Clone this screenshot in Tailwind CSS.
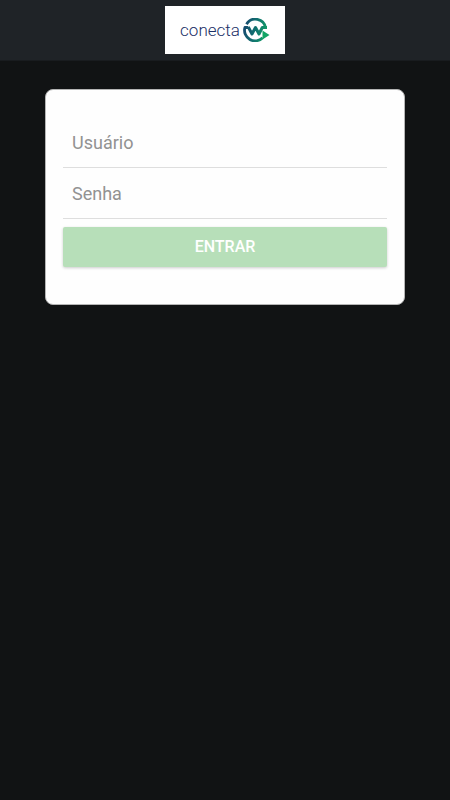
<!DOCTYPE html>
<html lang="pt-BR">
<head>
<meta charset="utf-8">
<meta name="viewport" content="width=device-width, initial-scale=1">
<title>Conecta</title>
<script src="https://cdn.jsdelivr.net/npm/@tailwindcss/browser@4"></script>
</head>
<body class="min-h-screen bg-[#111314] font-['Roboto',sans-serif]">
<header class="flex justify-center border-b border-[#191c1f] bg-[#1f2327] py-1.5">
  <div class="flex h-12 w-30 items-center justify-center gap-[3px] bg-white" role="img" aria-label="conecta w">
    <span class="text-[17px] leading-6 font-light text-[#1b2f66]">conecta</span>
    <svg class="h-6 w-[27px]" viewBox="0 0 27 24" fill="none" aria-hidden="true">
      <defs>
        <linearGradient id="ring" gradientUnits="userSpaceOnUse" x1="0" y1="8" x2="26" y2="14">
          <stop offset="0" stop-color="#17466f"/><stop offset=".5" stop-color="#11736f"/><stop offset="1" stop-color="#12a565"/>
        </linearGradient>
      </defs>
      <path d="M3.500 6.300A10.300 10.300 0 0 1 22.600 10" stroke="url(#ring)" stroke-width="2.800"/>
      <path d="M5.300 9.500H1.900A10.600 10.600 0 0 0 19.700 19.700" stroke="url(#ring)" stroke-width="2.800" stroke-linejoin="round"/>
      <path d="M5.300 9L9 16L12.500 9.500L16 16L19.300 9.500H24" stroke="url(#ring)" stroke-width="3" stroke-linejoin="round"/>
      <path d="M19.500 12.500L26.500 17L19.500 21.500Z" fill="#12a565"/>
    </svg>
  </div>
</header>
<main class="px-[10%] pt-7">
  <form class="flex flex-col rounded-lg border border-[#b5b5b5] bg-[#fefefe] px-[17px] pt-[27px] pb-[37px]">
    <input aria-label="Usuário" name="user" type="text" placeholder="Usuário" autocomplete="username" class="h-[51px] w-full border-b border-[#dedede] px-[9px] text-lg text-[#222] outline-none placeholder:text-[#929292]">
    <input aria-label="Senha" name="password" type="password" placeholder="Senha" autocomplete="current-password" class="h-[51px] w-full border-b border-[#dedede] px-[9px] text-lg text-[#222] outline-none placeholder:text-[#929292]">
    <button type="submit" class="mt-2 h-10 w-full rounded-xs bg-[#b7dfb9] text-base font-medium text-white shadow-[0_1px_3px_rgba(0,0,0,0.2)]">ENTRAR</button>
  </form>
</main>
</body>
</html>
